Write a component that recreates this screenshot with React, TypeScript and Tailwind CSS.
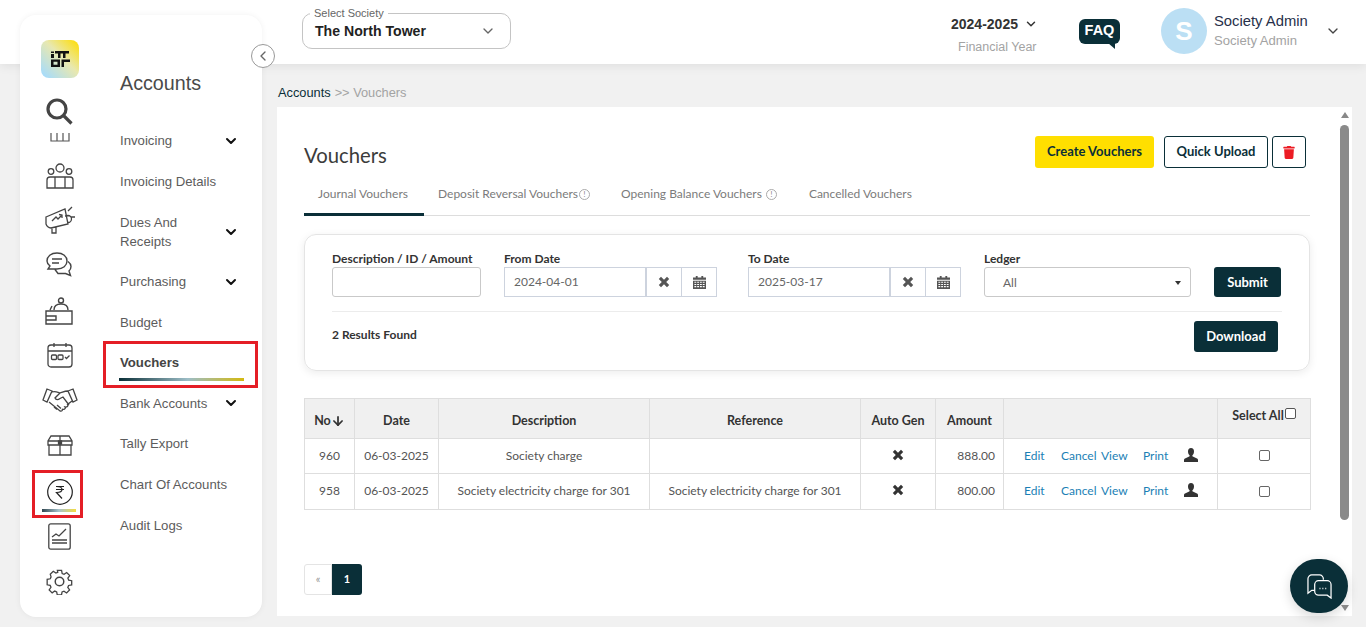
import { ArrowDown, ChevronDown, ChevronLeft } from "lucide-react";
import { FaTrash } from "react-icons/fa";

const DARK = "#0a2f38";

const MENU = [
  { label: "Invoicing", arrow: true, h: "h-[41px]" },
  { label: "Invoicing Details", arrow: false, h: "h-[41px]" },
  { label: "Dues And Receipts", arrow: true, h: "h-[59px]" },
  { label: "Purchasing", arrow: true, h: "h-[41px]" },
  { label: "Budget", arrow: false, h: "h-[40px]" },
  { label: "Vouchers", arrow: false, h: "h-[41px]", active: true },
  { label: "Bank Accounts", arrow: true, h: "h-[40px]" },
  { label: "Tally Export", arrow: false, h: "h-[41px]" },
  { label: "Chart Of Accounts", arrow: false, h: "h-[41px]" },
  { label: "Audit Logs", arrow: false, h: "h-[41px]" },
];

const ROWS = [
  { no: "960", date: "06-03-2025", desc: "Society charge", ref: "", amount: "888.00", h: "h-[35px]" },
  { no: "958", date: "06-03-2025", desc: "Society electricity charge for 301", ref: "Society electricity charge for 301", amount: "800.00", h: "h-[36px]" },
];

function Cross({ className }: { className: string }) {
  return (
    <svg viewBox="0 0 12 12" className={className} fill="currentColor">
      <path d="M3 .8 6 3.8 9 .8 11.2 3 8.2 6 11.2 9 9 11.2 6 8.2 3 11.2.8 9 3.8 6 .8 3Z" />
    </svg>
  );
}

function CalendarGlyph() {
  return (
    <svg viewBox="0 0 14 14" className="h-[13px] w-[13px] text-[#555]" fill="currentColor">
      <path d="M3 0h2v1.5h4V0h2v1.500h3V4H0V1.500h3Z" />
      <path fillRule="evenodd" d="M0 5h14v9H0Zm1.500 1.200v1.200h2V6.200Zm3 0v1.200h2V6.200Zm3 0v1.200h2V6.200Zm3 0v1.200h2V6.200Zm-9 2.300v1.200h2V8.500Zm3 0v1.200h2V8.500Zm3 0v1.200h2V8.500Zm3 0v1.200h2V8.500Zm-9 2.300V12h2v-1.200Zm3 0V12h2v-1.200Zm3 0V12h2v-1.200Zm3 0V12h2v-1.200Z" />
    </svg>
  );
}

function PersonGlyph() {
  return (
    <svg viewBox="0 0 14 14" className="mb-[2px] h-[14px] w-[14px] text-[#333]" fill="currentColor">
      <path d="M7 0c2 0 3 1.400 3 3.400 0 1.500-.6 3-1.500 3.900-.3.400-.2 1 .3 1.200L13 10.600c.6.300 1 .8 1 1.500V14H0v-1.900c0-.7.400-1.200 1-1.500l4.200-2.100c.5-.2.600-.8.300-1.200C4.600 6.400 4 4.900 4 3.400 4 1.400 5 0 7 0Z" />
    </svg>
  );
}

function Logo() {
  return (
    <div className="flex h-[38px] w-[38px] items-center justify-center rounded-lg bg-[linear-gradient(45deg,#a9dcf8_8%,#e8e8b0_55%,#fbdf1e_92%)]">
      <svg viewBox="0 0 19 16" className="h-[18px] w-[19px]" fill="#111">
        <path d="M0 3h3v4H0ZM0 .5h3v1.500H0ZM4 0h14v2.500h-3.500V7H12V2.500h-2.500V7H7V2.500H4ZM0 8.500h9V16H0Zm2.500 2.300v2.900h4v-2.900ZM10.500 8.500H19V11h-6v5h-2.500Z" />
      </svg>
    </div>
  );
}

function RailIcon({ children, size, className }: { children: React.ReactNode; size: string; className: string }) {
  return <div className={`flex justify-center text-[#444] ${size} ${className}`}>{children}</div>;
}

function Rail() {
  return (
    <div className="flex w-[80px] shrink-0 flex-col items-center pt-[25px]">
      <Logo />
      <RailIcon size="h-[27px] w-[27px]" className="mr-[2px] mt-[20px]">
        <svg viewBox="0 0 27 27" fill="none" stroke="currentColor" strokeWidth="3.200"><circle cx="11" cy="11" r="9" /><path d="m17.500 17.500 8 8" /></svg>
      </RailIcon>
      <div className="mt-[8px] h-[9px] w-[20px] overflow-hidden">
        <svg viewBox="0 0 20 9" className="h-[9px] w-[20px]" fill="none" stroke="#555" strokeWidth="1.200"><path d="M1 0v8h18V0M7 0v8M13 0v8" /></svg>
      </div>
      <RailIcon size="h-[26px] w-[28px]" className="mr-[1px] mt-[21px]">
        <svg viewBox="0 0 28 26" fill="none" stroke="currentColor" strokeWidth="1.300"><circle cx="14" cy="5" r="4" /><circle cx="5" cy="8.500" r="2.800" /><circle cx="23" cy="8.500" r="2.800" /><path d="M1 25v-8a3 3 0 0 1 3-3h20a3 3 0 0 1 3 3v8ZM9 25v-11M19 25v-11" /></svg>
      </RailIcon>
      <RailIcon size="h-[30px] w-[32px]" className="mt-[16px]">
        <svg viewBox="0 0 32 30" fill="none" stroke="currentColor" strokeWidth="1.300"><path d="m2 12 19-8 3 15-17 4c-2-.200-4-1-5-4ZM21 11l3-.500a3.500 3.500 0 0 1 0 7M8 23v5h4v-6M8 16l4-4 2 2 4-4M15 9.500l3 .500v3M24 6l4-4M27 12h4" /></svg>
      </RailIcon>
      <RailIcon size="h-[26px] w-[26px]" className="mr-[2px] mt-[17px]">
        <svg viewBox="0 0 26 26" fill="none" stroke="currentColor" strokeWidth="1.400"><path d="M11 1c6 0 10 3.500 10 8s-4 8-10 8H2l2-3C2 12.500 1 11 1 9c0-4.500 4-8 10-8ZM6 7h10M6 11h7M22 9.500c2 1.500 3 3 3 5 0 2-1 3.500-2 4.500l1.500 4.500-5-2H12l-3-4" /></svg>
      </RailIcon>
      <RailIcon size="h-[28px] w-[28px]" className="mr-[2px] mt-[19px]">
        <svg viewBox="0 0 28 28" fill="none" stroke="currentColor" strokeWidth="1.400"><circle cx="16" cy="3.500" r="2.500" /><path d="M9 13c0-4 3-6 7-6s7 2 7 6M7 9 5 13M1 14h26v13H1ZM1 19h10v4H1" /></svg>
      </RailIcon>
      <RailIcon size="h-[26px] w-[26px]" className="mr-[1px] mt-[17px]">
        <svg viewBox="0 0 26 26" fill="none" stroke="currentColor" strokeWidth="1.300"><rect x="1" y="3" width="24" height="22" rx="3" /><path d="M1 9h24M7 1v4M19 1v4" /><rect x="4.500" y="13" width="5" height="4.500" rx="1" /><rect x="11" y="13" width="5" height="4.500" rx="1" /><path d="m18 15 1.500 1.500 3-3" /></svg>
      </RailIcon>
      <RailIcon size="h-[24px] w-[36px]" className="mt-[20px]">
        <svg viewBox="0 0 36 24" fill="none" stroke="currentColor" strokeWidth="1.300"><path d="M5 1 1 12l4 2 5-11ZM31 1l4 11-4 2-5-11ZM10 4c3-1 5 0 8 1 3-1 5-2 8-2M7 14l11 9c2 .500 3-1 2-2 2 1 4-.500 3-2 2 .500 3.500-1 2.500-2.500L30 13M18 5l-5 5c1 2 3 2 5 .500l3-1.500 6 8M12 19l3 2.500M15 17l4 3.500" /></svg>
      </RailIcon>
      <RailIcon size="h-[21px] w-[26px]" className="mt-[23px]">
        <svg viewBox="0 0 26 21" fill="none" stroke="currentColor" strokeWidth="1.300"><path d="M4 1h18l3 5v4H1V6ZM2 10v10h22V10M13 1v19M1 6h24" /><path d="M11.500 6h3v3h-3Z" fill="currentColor" /></svg>
      </RailIcon>
      {/* current section, the red frame is part of the picture */}
      <div className="relative mt-[23px] h-[26px] w-[26px]">
        <svg viewBox="0 0 26 26" fill="none" stroke="#222" strokeWidth="1.200"><circle cx="13" cy="13" r="12.300" /><path d="M9 7.500h8M9 10.500h8M9.500 7.500c4 0 5.500 1.500 5.500 3s-2 3-5.500 3l5.500 6" /></svg>
        <div className="absolute left-[-5px] top-[30px] h-[3px] w-[34px] bg-[linear-gradient(90deg,#2f4650,#a7c3cc_50%,#f4dc3f)]" />
        <div className="absolute left-[-15px] top-[-9px] h-[48px] w-[51px] border-[3px] border-[#e41e26]" />
      </div>
      <RailIcon size="h-[27px] w-[23px]" className="mr-[1px] mt-[18px]">
        <svg viewBox="0 0 23 27" fill="none" stroke="currentColor" strokeWidth="1.300"><rect x=".8" y=".8" width="21.400" height="25.400" rx="2" /><path d="m4 14 4-3 3 2 7-7M4 17h15M4 20h15" /></svg>
      </RailIcon>
      <RailIcon size="h-[27px] w-[27px]" className="mr-[1px] mt-[18px]">
        <svg viewBox="0 0 24 24" fill="none" stroke="currentColor" strokeWidth="1.300"><path d="M9.900 1h4.200l.6 3.100 1.900.8 2.600-1.800 3 3-1.800 2.600.8 1.900 3 .6v4.200l-3.100.6-.8 1.900 1.800 2.600-3 3-2.600-1.800-1.900.8-.6 3h-4.200l-.6-3.100-1.900-.8-2.600 1.800-3-3 1.800-2.600-.8-1.900-3-.6V9.900l3.100-.6.800-1.900L2.800 4.800l3-3 2.600 1.800 1.900-.8Z" transform="translate(1.300 1.300) scale(.89)" /><circle cx="12" cy="12" r="3.800" /></svg>
      </RailIcon>
    </div>
  );
}

function Sidebar() {
  return (
    <aside className="relative z-10 flex h-[602px] w-[242px] rounded-2xl bg-white shadow-[0_0_6px_rgba(0,0,0,0.06)]">
      <Rail />
      <div className="flex-1">
        <h2 className="h-[105px] pl-5 pt-[56px] text-[19.700px] leading-6 text-[#4a4a4a]">Accounts</h2>
        {MENU.map((item) => (
          <div key={item.label} className={`relative flex items-center pl-5 text-[13.200px] leading-[19px] text-[#5c5c5c] ${item.h}`}>
            <span className={item.active ? "font-bold text-[#444]" : item.label === "Dues And Receipts" ? "w-[80px]" : ""}>{item.label}</span>
            {item.arrow && <ChevronDown className="absolute left-[123px] h-4 w-4 text-[#111]" strokeWidth={3} />}
            {item.active && (
              <>
                <div className="absolute left-[19px] top-[36px] h-[3px] w-[125px] bg-[linear-gradient(90deg,#0a2f38,#9cbdc6_55%,#d4b90f)]" />
                <div className="absolute left-[3px] top-[-1px] h-[47px] w-[155px] border-[3px] border-[#e41e26]" />
              </>
            )}
          </div>
        ))}
      </div>
      <button className="absolute left-[231px] top-[29px] flex h-6 w-6 items-center justify-center rounded-full border border-[#999] bg-white text-[#666]">
        <ChevronLeft className="h-4 w-4" />
      </button>
    </aside>
  );
}

function Header() {
  return (
    <header className="flex h-[64px] items-center pb-[2px] pl-[25px]">
      <div className="relative flex h-[36px] w-[209px] shrink-0 items-center justify-between rounded-[10px] border border-[#c4c4c4] pl-3 pr-[14px]">
        <span className="absolute left-[7px] top-[-7px] bg-white px-1 text-[11px] leading-3 text-[#666]">Select Society</span>
        <span className="pt-[2px] text-[14.100px] font-bold text-[#222]">The North Tower</span>
        <ChevronDown className="h-4 w-4 text-[#666]" strokeWidth={2} />
      </div>
      <div className="ml-[440px] mt-[7px] flex w-[91px] shrink-0 flex-col items-start">
        <div className="flex items-center gap-[6px] whitespace-nowrap text-[14px] font-bold leading-5 text-[#333]">
          2024-2025
          <ChevronDown className="h-[14px] w-[14px] text-[#333]" strokeWidth={2.500} />
        </div>
        <span className="ml-[7px] mt-[5px] whitespace-nowrap text-[12.500px] leading-4 text-[#a3a3a3]">Financial Year</span>
      </div>
      <div className="relative ml-[37px] flex h-[25px] w-[41px] shrink-0 items-center justify-center rounded-[6px] bg-[#0a2f38] text-[14.500px] font-bold text-white">
        FAQ
        <span className="absolute bottom-[-5px] right-[5px] h-0 w-0 border-l-[7px] border-t-[6px] border-l-transparent border-t-[#0a2f38]" />
      </div>
      <div className="ml-[41px] flex h-[46px] w-[46px] shrink-0 items-center justify-center rounded-full bg-[#bbdff4] text-[26px] font-bold text-white">S</div>
      <div className="mb-[3px] ml-[7px] w-[104px] shrink-0 whitespace-nowrap">
        <div className="text-[14.800px] leading-5 text-[#27304a]">Society Admin</div>
        <div className="mt-[2px] text-[13.100px] leading-4 text-[#a3a3a3]">Society Admin</div>
      </div>
      <ChevronDown className="ml-[7px] h-4 w-4 shrink-0 text-[#444]" strokeWidth={2} />
    </header>
  );
}

function DateField({ label, value, className }: { label: string; value: string; className: string }) {
  return (
    <div className={className}>
      <div className="mb-[1px] whitespace-nowrap text-[12px] font-bold leading-[15px] text-[#333]">{label}</div>
      <div className="flex h-[30px] w-[213px] border border-[#cdd3de] text-[12px] text-[#666]">
        <div className="flex w-[140px] items-center pl-[9px]">{value}</div>
        <div className="flex w-[36px] items-center justify-center border-l-2 border-[#cdd3de]"><Cross className="h-[12px] w-[12px] text-[#555]" /></div>
        <div className="flex flex-1 items-center justify-center border-l border-[#cdd3de]"><CalendarGlyph /></div>
      </div>
    </div>
  );
}

function Filters() {
  return (
    <section className="mt-[18px] h-[137px] rounded-xl border border-[#e4e4e4] px-[27px] pt-[16px] shadow-[0_2px_8px_rgba(0,0,0,0.08)]">
      <div className="flex items-end">
        <div className="w-[149px]">
          <div className="mb-[1px] whitespace-nowrap text-[12px] font-bold leading-[15px] text-[#333]">Description / ID / Amount</div>
          <input className="block h-[30px] w-[149px] rounded-[3px] border border-[#c9c9c9]" />
        </div>
        <DateField label="From Date" value="2024-04-01" className="ml-[23px]" />
        <DateField label="To Date" value="2025-03-17" className="ml-[31px]" />
        <div className="ml-[23px] w-[207px]">
          <div className="mb-[1px] text-[12px] font-bold leading-[15px] text-[#333]">Ledger</div>
          <div className="flex h-[30px] items-center justify-between rounded-[3px] border border-[#c9c9c9] pl-[18px] pr-[9px] pt-[2px] text-[12px] text-[#666]">
            All
            <span className="h-0 w-0 border-x-[3px] border-t-[4px] border-x-transparent border-t-[#333]" />
          </div>
        </div>
        <button className="ml-[23px] h-[30px] w-[67px] rounded-[3px] bg-[#0a2f38] pt-[1px] text-[13px] font-bold text-white">Submit</button>
      </div>
      <div className="mt-[14px] flex border-t border-[#ececec] pr-[4px] pt-[9px]">
        <span className="mt-[6px] text-[12px] font-bold leading-[15px] text-[#333]">2 Results Found</span>
        <button className="ml-auto h-[31px] w-[84px] rounded-[3px] bg-[#0a2f38] text-[13px] font-bold text-white">Download</button>
      </div>
    </section>
  );
}

function Table() {
  const th = "border border-[#dedede] bg-[#f0f0f0] text-[12.500px] font-bold text-[#333]";
  const td = "border border-[#dedede] pb-[1px] text-center text-[12px] text-[#555]";
  const link = "border border-[#dedede] pb-[1px] text-[12px] text-[#1b7fb5]";
  return (
    <table className="mt-[27px] w-[1006px] table-fixed border-collapse">
      <colgroup>
        <col className="w-[50px]" /><col className="w-[84px]" /><col className="w-[211px]" /><col className="w-[211px]" />
        <col className="w-[75px]" /><col className="w-[68px]" /><col className="w-[214px]" /><col className="w-[93px]" />
      </colgroup>
      <thead>
        <tr className="h-[40px]">
          <th className={`${th} pt-[5px]`}><span className="inline-flex items-center">No<ArrowDown className="h-[14px] w-[14px]" strokeWidth={3} /></span></th>
          <th className={`${th} pt-[5px]`}>Date</th>
          <th className={`${th} pt-[5px]`}>Description</th>
          <th className={`${th} pt-[5px]`}>Reference</th>
          <th className={`${th} pt-[5px]`}>Auto Gen</th>
          <th className={`${th} pt-[5px]`}>Amount</th>
          <th className={th} />
          <th className={`${th} pb-[4px]`}>
            <span className="inline-flex items-start">Select All<span className="ml-[1px] mt-[1px] h-[11px] w-[11px] rounded-[2px] border border-[#555] bg-white" /></span>
          </th>
        </tr>
      </thead>
      <tbody>
        {ROWS.map((row) => (
          <tr key={row.no} className={row.h}>
            <td className={td}>{row.no}</td>
            <td className={td}>{row.date}</td>
            <td className={td}>{row.desc}</td>
            <td className={td}>{row.ref}</td>
            <td className={td}><Cross className="mx-auto mb-[2px] h-[12px] w-[12px] text-[#333]" /></td>
            <td className={`${td} pr-2 text-right`}>{row.amount}</td>
            <td className={link}>
              <div className="flex items-center pl-[20px]">
                <span className="w-[37px]">Edit</span>
                <span className="w-[40px]">Cancel</span>
                <span className="w-[42px]">View</span>
                <span className="w-[41px]">Print</span>
                <PersonGlyph />
              </div>
            </td>
            <td className={td}>
              <span className="mx-auto block h-[11px] w-[11px] rounded-[2px] border border-[#666]" />
            </td>
          </tr>
        ))}
      </tbody>
    </table>
  );
}

function Panel() {
  return (
    <section className="flex h-[509px] bg-white font-['Lato',sans-serif]">
      <div className="w-[1033px] pl-[27px]">
        <div className="flex h-[62px] items-start justify-between pr-[4px] pt-[29px]">
          <h1 className="mt-[1px] text-[20.300px] leading-[36px] text-[#3b3b3b]">Vouchers</h1>
          <div className="flex">
            <button className="h-[32px] w-[119px] rounded-[3px] bg-[#ffdf00] text-[13px] font-bold text-[#0a2f38]">Create Vouchers</button>
            <button className="ml-[10px] h-[32px] w-[104px] rounded-[3px] border border-[#0a2f38] text-[13px] font-bold text-[#0a2f38]">Quick Upload</button>
            <button className="ml-[4px] flex h-[32px] w-[34px] items-center justify-center rounded-[3px] border border-[#0a2f38]"><FaTrash className="h-[13px] w-[12px] text-[#ec1c24]" /></button>
          </div>
        </div>
        <nav className="mt-[5px] flex h-[42px] border-b border-[#ddd] text-[12px] text-[#7b7b7b]">
          <div className="mb-[-1px] flex w-[120px] items-center justify-center border-b-[3px] border-[#0a2f38] pr-[2px]">Journal Vouchers</div>
          <div className="ml-[14px] flex items-center gap-[1px] pb-[1px]">
            Deposit Reversal Vouchers
            <span className="flex h-[11px] w-[11px] items-center justify-center rounded-full border border-[#aaa] text-[7px]">!</span>
          </div>
          <div className="ml-[31px] flex items-center gap-[4px] pb-[1px]">
            Opening Balance Vouchers
            <span className="flex h-[11px] w-[11px] items-center justify-center rounded-full border border-[#aaa] text-[7px]">!</span>
          </div>
          <div className="ml-[32px] flex items-center pb-[1px]">Cancelled Vouchers</div>
        </nav>
        <Filters />
        <Table />
        <div className="mt-[54px] flex h-[31px] text-[11px]">
          <span className="flex w-[28px] items-center justify-center rounded-l-[3px] border border-[#e4e4e4] text-[#999]">«</span>
          <span className="flex w-[30px] items-center justify-center rounded-r-[3px] bg-[#0a2f38] font-bold text-white">1</span>
        </div>
      </div>
      {/* scrollbar */}
      <div className="relative z-10 ml-[30px] flex w-[9px] flex-col items-center pt-[5px]">
        <span className="h-0 w-0 border-x-[4.500px] border-b-[6px] border-x-transparent border-b-[#888]" />
        <span className="mt-[7px] h-[395px] w-[9px] shrink-0 rounded-full bg-[#8a8a8a]" />
        <span className="mt-[85px] h-0 w-0 border-x-[4.500px] border-t-[6px] border-x-transparent border-t-[#888]" />
      </div>
    </section>
  );
}

export default function App() {
  return (
    <div className="relative flex h-[627px] w-[1366px] overflow-hidden bg-[#f1f1f1] font-['Liberation_Sans',sans-serif]">
      <div className="absolute inset-x-0 top-0 h-[64px] bg-white shadow-[0_2px_10px_rgba(0,0,0,0.08)]" />
      <div className="relative w-[277px] shrink-0 pl-5 pt-[15px]">
        <Sidebar />
      </div>
      <main className="relative w-[1075px]">
        <Header />
        <div className="flex h-[43px] items-center pl-[1px] pt-[14px] text-[12.800px]">
          <span className="text-[#0a2f38]">Accounts</span>
          <span className="ml-1 text-[#a3a3a3]">{">>"} Vouchers</span>
        </div>
        <Panel />
      </main>
      <button className="absolute left-[1290px] top-[559px] flex h-[54px] w-[58px] items-center justify-center rounded-full shadow-[0_4px_12px_rgba(0,0,0,0.15)]" style={{ backgroundColor: DARK }}>
        <svg viewBox="0 0 28 26" className="h-[25px] w-[27px]" fill="none" stroke="white" strokeWidth="1.300">
          <path d="M18 6V5a4 4 0 0 0-4-4H6a4 4 0 0 0-4 4v15l4-3h3" />
          <path d="M13 7h9a4 4 0 0 1 4 4v14l-4-3H13a4 4 0 0 1-4-4v-7a4 4 0 0 1 4-4Z" fill={DARK} />
          <path d="M14 15h1M17 15h1M20 15h1" strokeWidth="1.600" />
        </svg>
      </button>
    </div>
  );
}
